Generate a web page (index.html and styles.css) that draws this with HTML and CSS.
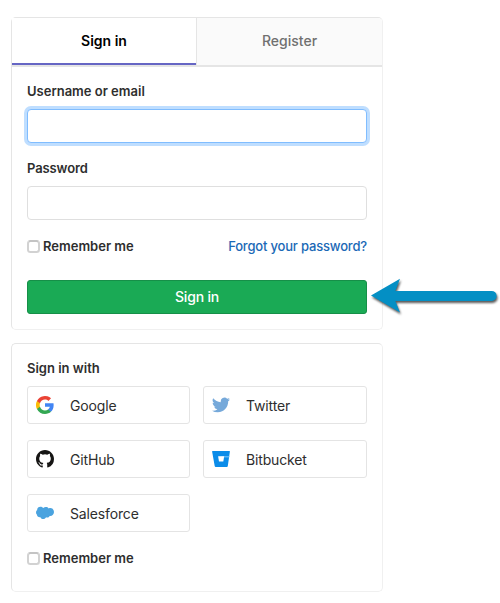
FILE: index.html
```html
<!DOCTYPE html>
<html lang="en">
<head>
<meta charset="utf-8">
<title>Sign in</title>
<link rel="stylesheet" href="styles.css">
</head>
<body>
<main class="page">
  <section class="panel login">
    <nav class="tabs">
      <a class="tab active"><span>Sign in</span></a>
      <a class="tab"><span>Register</span></a>
    </nav>
    <form class="login-body">
      <label class="label" for="user"><span>Username or email</span></label>
      <input class="field focused" id="user" type="text">
      <label class="label second" for="pass"><span>Password</span></label>
      <input class="field" id="pass" type="password">
      <div class="options">
        <label class="remember"><input class="check" type="checkbox"><span>Remember me</span></label>
        <a class="forgot"><span>Forgot your password?</span></a>
      </div>
      <div class="submit-row">
        <button class="submit" type="button"><span>Sign in</span></button>
        <svg class="arrow" width="134" height="42" viewBox="0 0 134 42">
          <path d="M4 17.6 33 .8 28.4 12.9H124.6a5 5 0 0 1 0 10H28.4L33 34.4Z"/>
        </svg>
      </div>
    </form>
  </section>

  <section class="panel social">
    <h2 class="label"><span>Sign in with</span></h2>
    <div class="providers">
      <a class="provider">
        <svg class="logo" viewBox="0 0 18 18"><path fill="#4285f4" d="M17.64 9.2c0-.64-.06-1.25-.16-1.84H9v3.49h4.84a4.14 4.14 0 0 1-1.8 2.71v2.26h2.92c1.7-1.57 2.68-3.88 2.68-6.62z"/><path fill="#34a853" d="M9 18c2.43 0 4.47-.8 5.96-2.18l-2.92-2.26c-.8.54-1.84.86-3.04.86-2.34 0-4.33-1.58-5.04-3.71H.96v2.33A9 9 0 0 0 9 18z"/><path fill="#fbbc05" d="M3.96 10.71a5.41 5.41 0 0 1 0-3.42V4.96H.96a9 9 0 0 0 0 8.08z"/><path fill="#ea4335" d="M9 3.58c1.32 0 2.51.45 3.44 1.35l2.58-2.59A9 9 0 0 0 .96 4.96l3 2.33C4.67 5.16 6.66 3.58 9 3.58z"/></svg>
        <span>Google</span>
      </a>
      <a class="provider">
        <svg class="logo" viewBox="0 0 24 24"><path fill="#76a9da" d="M23.95 4.57a10 10 0 0 1-2.82.77 4.96 4.96 0 0 0 2.16-2.72c-.95.55-2 .95-3.13 1.18a4.92 4.92 0 0 0-8.38 4.48C7.69 8.1 4.07 6.13 1.64 3.16a4.92 4.92 0 0 0 1.52 6.57 4.9 4.9 0 0 1-2.23-.61v.06c0 2.38 1.7 4.37 3.95 4.82a5 5 0 0 1-2.21.09 4.94 4.94 0 0 0 4.6 3.42A9.87 9.87 0 0 1 0 19.54a14 14 0 0 0 7.55 2.21c9.06 0 14.01-7.5 14.01-13.99 0-.21 0-.42-.02-.63a9.94 9.94 0 0 0 2.41-2.56z"/></svg>
        <span>Twitter</span>
      </a>
      <a class="provider">
        <svg class="logo" viewBox="0 0 16 16"><path fill="#161514" fill-rule="evenodd" d="M8 0C3.58 0 0 3.58 0 8c0 3.54 2.29 6.53 5.47 7.59.4.07.55-.17.55-.38 0-.19-.01-.82-.01-1.49-2.01.37-2.53-.49-2.69-.94-.09-.23-.48-.94-.82-1.13-.28-.15-.68-.52-.01-.53.63-.01 1.08.58 1.23.82.72 1.21 1.87.87 2.33.66.07-.52.28-.87.51-1.07-1.78-.2-3.64-.89-3.64-3.95 0-.87.31-1.59.82-2.15-.08-.2-.36-1.02.08-2.12 0 0 .67-.21 2.2.82a7.6 7.6 0 0 1 4 0c1.53-1.04 2.2-.82 2.2-.82.44 1.1.16 1.92.08 2.12.51.56.82 1.27.82 2.15 0 3.07-1.87 3.75-3.65 3.95.29.25.54.73.54 1.48 0 1.07-.01 1.93-.01 2.2 0 .21.15.46.55.38A8.01 8.01 0 0 0 16 8c0-4.42-3.58-8-8-8z"/></svg>
        <span>GitHub</span>
      </a>
      <a class="provider">
        <svg class="logo" viewBox="0 0 18 18"><path fill="#0b8ce9" d="M.6 1h16.8q.6 0 .5.6L15.8 16q-.1 1-1.1 1H3.8q-1 0-1.1-1L.1 1.6Q0 1 .6 1z"/><path fill="#5bb5f4" d="M6.1 6.1h11.2l-.2 1.5h-5z"/><path fill="#fff" d="M6.1 6.3H12.2l-.9 5.3H7z"/></svg>
        <span>Bitbucket</span>
      </a>
      <a class="provider">
        <svg class="logo" viewBox="0 0 18 18"><path fill="#4aa3df" d="M1.2 6C1 4 2.5 2.8 4.4 2.8c1.2 0 2 .4 2.8 1.2.8-.7 1.6-1 2.6-1 1.3 0 2.2.5 2.9 1.4.6-.3 1.1-.4 1.7-.4C16.500 4 18 5.700 18 8c0 2.600-1.900 4.200-4.400 3.900-.7 1.500-2 2.100-3.600 1.400-.9 2.400-4.600 2.300-5.600-.1C2.300 13.500.9 12.200 1 10.700-.3 9.800-.3 7 1.200 6z"/></svg>
        <span>Salesforce</span>
      </a>
    </div>
    <label class="remember"><input class="check" type="checkbox"><span>Remember me</span></label>
  </section>
</main>
</body>
</html>
```
FILE: styles.css
```css
* { box-sizing: border-box; }

body {
  margin: 0;
  background: #fff;
  color: #2e2e2e;
  font: 600 13px/20px Inter, "Liberation Sans", sans-serif;
}

.page {
  width: 372px;
  margin: 17px 0 0 11px;
  display: flex;
  flex-direction: column;
  gap: 13px;
}

.panel {
  border: 1px solid #e5e5e5;
  border-right-color: #f0f0f0;
  border-bottom-color: #f0f0f0;
  border-radius: 5px;
}

.login { height: 313px; }

.tabs {
  display: grid;
  grid-template-columns: 184px 1fr;
  height: 49px;
  border-bottom: 2px solid #e5e5e5;
}

.tab {
  display: flex;
  align-items: center;
  justify-content: center;
  padding-bottom: 2px;
  background: #fafafa;
  color: #707070;
  font-size: 14px;
  font-weight: 500;
  border-left: 1px solid #e5e5e5;
  border-top-right-radius: 4px;
}

.tab.active {
  background: #fff;
  color: #000;
  font-weight: 600;
  border-left: 0;
  box-shadow: inset 0 -2px #6666c4;
}

.login-body { padding: 14px 15px 0; }

.label {
  display: block;
  margin: 0;
  font-size: 13px;
  font-weight: 600;
  line-height: 20px;
}

.label.second {
  margin-top: 15px;
  letter-spacing: -.1px;
}

.field {
  display: block;
  width: 100%;
  height: 34px;
  margin: 8px 0 0;
  border: 1px solid #dfdfdf;
  border-radius: 4px;
  outline: 0;
}

.field.focused {
  border-color: #80bdff;
  box-shadow: 0 0 0 3px #bfdeff;
}

.options {
  display: flex;
  justify-content: space-between;
  margin-top: 16px;
}

.remember {
  display: flex;
  align-items: center;
  gap: 3px;
}

.check {
  appearance: none;
  width: 13px;
  height: 13px;
  margin: 1px 0 0;
  border: 2px solid #d2d2d2;
  border-top-color: #c4c4c4;
  border-radius: 3.5px;
  background: #fff;
}

.forgot {
  color: #1b69b6;
  font-weight: 500;
  letter-spacing: -.18px;
}

.submit-row {
  position: relative;
  margin-top: 24px;
}

.submit {
  display: block;
  width: 100%;
  height: 34px;
  padding: 0;
  border: 1px solid #168f48;
  border-radius: 3px;
  background: #1aaa55;
  color: #fff;
  font: 500 14px/20px Inter, "Liberation Sans", sans-serif;
  letter-spacing: -.2px;
}

.arrow {
  position: absolute;
  top: -2px;
  left: 340px;
  fill: #048fc4;
  filter: drop-shadow(1px 2px 1px rgba(0, 0, 0, .65));
}

.social {
  height: 249px;
  padding: 14px 15px 0;
}

.providers {
  display: grid;
  grid-template-columns: 163px 164px;
  gap: 16px 13px;
  margin: 8px 0 16px;
}

.provider {
  display: flex;
  align-items: center;
  gap: 16px;
  height: 38px;
  padding: 0 8px;
  border: 1px solid #e4e4e4;
  border-radius: 3px;
  font-size: 14px;
  font-weight: 400;
  letter-spacing: -.15px;
}

.logo {
  width: 18px;
  height: 18px;
}

.provider span { margin-top: 2px; }
```
